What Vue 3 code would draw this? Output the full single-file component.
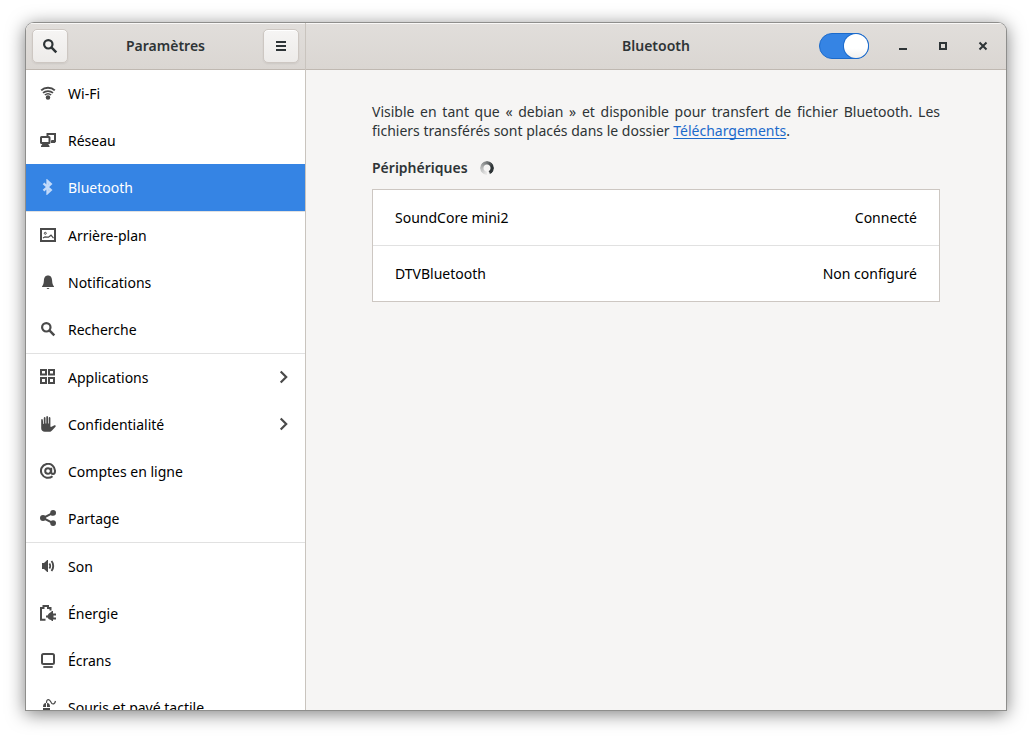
<script setup>
import { ref } from 'vue'

const enabled = ref(true)

const icons = {
  wifi: {
    fill: ['M8 10.2a2.3 2.3 0 1 1 0 4.6a2.3 2.3 0 0 1 0-4.6z'],
    line: [
      { d: 'M1.2 5.4C4.8 1.900 11.2 1.900 14.8 5.4', w: 2 },
      { d: 'M3 7.900c2.800-2.500 7.200-2.500 10 0', w: 1.700 },
      { d: 'M4.800 10c1.800-1.500 4.600-1.500 6.400 0', w: 1.400 }
    ]
  },
  network: {
    fill: ['M3 11h4.500l2 3v1H1v-1z', 'M11 8.500h3.200l1.300 2.500H11z'],
    line: [
      { d: 'M1.500 5H9q.5 0 .5.5V10.500q0 .5-.5.5H1.500q-.5 0-.5-.5V5.500q0-.5.5-.5z', w: 2 },
      { d: 'M7.500 4V2H15v7h-3.500', w: 2 }
    ]
  },
  bluetooth: {
    line: [{ d: 'M3.500 4.300l7.300 6.700L7.500 14V2L10.800 5L3.500 11.700', w: 2.300 }]
  },
  background: {
    line: [
      { d: 'M1 2h14v12H1z', w: 2 },
      { d: 'M3 11l2-1.200l2 .4h1.500l2.500-2l2.500 3', w: 1.200 },
      { d: 'M5.300 5.300a1 1 0 1 1 0 2a1 1 0 0 1 0-2z', w: 1 }
    ]
  },
  bell: {
    fill: ['M8 1.500c3 0 3.900 2.200 4.100 5c.2 2.800.6 4.700 1.900 5.900V13H2v-.6c1.300-1.200 1.700-3.100 1.900-5.900c.2-2.800 1.100-5 4.100-5z', 'M6.500 14h3l-1 1h-1z']
  },
  search: {
    line: [
      { d: 'M6.300 2.100a4.200 4.200 0 1 1 0 8.400a4.200 4.200 0 0 1 0-8.400z', w: 2.200 },
      { d: 'M9.400 9.400l4.900 4.900', w: 2.500 }
    ]
  },
  apps: {
    line: [{ d: 'M1 1h5v4.500H1zM9 1h5v4.500H9zM1 9h5v5H1zM9 9h5v5H9z', w: 2 }]
  },
  hand: {
    fill: ['M1.200 9.500V3.700c0-1 1.500-1 1.600 0l.4 4.300h.6V1.900c0-1.100 1.700-1.100 1.700 0V7.500h.8V.9c0-1.100 1.700-1.100 1.700 0v6.600h.7V1.900c0-1.100 1.700-1.100 1.700 0v8.600l.6.600l3-1.700c1.200-.6 2.300.5 1.500 1.300L12 14.500c-.8.900-1.500 1.300-2.500 1.300H4.800c-2 0-3.600-1.500-3.600-3.500z']
  },
  at: {
    line: [
      { d: 'M12.500 13.200A7 7 0 1 1 15 8c0 1.900-.7 3-2 3s-1.800-.8-1.800-2.200V4.800', w: 2 },
      { d: 'M8 5.200a2.800 2.800 0 1 1 0 5.600a2.800 2.800 0 0 1 0-5.600z', w: 2 }
    ]
  },
  share: {
    fill: [
      'M3 5a3 3 0 1 1 0 6a3 3 0 0 1 0-6z',
      'M13.100 0a2.900 2.900 0 1 1 0 5.800a2.900 2.900 0 0 1 0-5.800z',
      'M13.100 10.200a2.900 2.900 0 1 1 0 5.800a2.900 2.900 0 0 1 0-5.800z'
    ],
    line: [{ d: 'M13 2.900L3 8l10 5.200', w: 2 }]
  },
  sound: {
    fill: ['M2 5h2L7.200 2H8v12h-.8L4 11H2z'],
    line: [
      { d: 'M9.400 5.500c1 1.400 1 3.600 0 5', w: 1.700 },
      { d: 'M11.500 3c2.300 2.700 2.300 7.300 0 10', w: 1.900 }
    ]
  },
  power: {
    fill: ['M6 10.500h1.500Q8.500 8 11 7l1-1h1v2.500h3v2h-2.500v2H16v2h-3V16h-1l-1-1q-2.500-.5-3.500-2.500H6z'],
    line: [{ d: 'M5.500 14.800H1V3h2.500V1H8v2h2.500v2.500', w: 2 }]
  },
  display: {
    line: [
      { d: 'M3.500 2h9q1.500 0 1.500 1.500v7q0 1.500-1.500 1.500h-9q-1.500 0-1.500-1.500v-7q0-1.500 1.500-1.500z', w: 2 },
      { d: 'M3.300 15h9.400', w: 1.800 }
    ]
  },
  mouse: {
    fill: ['M3 8c0-2.500 1-4 3-4v4zM7 4c2.200 0 3 1.500 3 4H7zM3 9h7v4q0 3-3.500 3T3 13z'],
    line: [{ d: 'M6.500 4C6.500 1 7.300.6 8.500.6c2.500 0 2 4.400 4.500 4.400c1.500 0 2-1 2.500-3', w: 1.200 }]
  }
}

const groups = [
  [
    { label: 'Wi-Fi', icon: 'wifi' },
    { label: 'Réseau', icon: 'network' },
    { label: 'Bluetooth', icon: 'bluetooth', active: true }
  ],
  [
    { label: 'Arrière-plan', icon: 'background' },
    { label: 'Notifications', icon: 'bell' },
    { label: 'Recherche', icon: 'search' }
  ],
  [
    { label: 'Applications', icon: 'apps', submenu: true },
    { label: 'Confidentialité', icon: 'hand', submenu: true },
    { label: 'Comptes en ligne', icon: 'at' },
    { label: 'Partage', icon: 'share' }
  ],
  [
    { label: 'Son', icon: 'sound' },
    { label: 'Énergie', icon: 'power' },
    { label: 'Écrans', icon: 'display' },
    { label: 'Souris et pavé tactile', icon: 'mouse' }
  ]
]

const devices = [
  { name: 'SoundCore mini2', state: 'Connecté' },
  { name: 'DTVBluetooth', state: 'Non configuré' }
]
</script>

<template>
  <div class="desktop">
    <div class="window">
      <aside class="sidebar">
        <header class="bar side-bar">
          <button class="tool" type="button" aria-label="Rechercher">
            <svg class="icon" viewBox="0 0 16 16">
              <path v-for="p in icons.search.line" :key="p.d" :d="p.d" :stroke-width="p.w" fill="none" stroke="currentColor" />
            </svg>
          </button>
          <h1 class="title">Paramètres</h1>
          <button class="tool" type="button" aria-label="Menu">
            <svg class="icon" viewBox="0 0 16 16">
              <path d="M3 3h10v2H3zM3 7h10v2H3zM3 11h10v2H3z" fill="currentColor" />
            </svg>
          </button>
        </header>
        <nav class="nav">
          <ul v-for="(group, g) in groups" :key="g" class="group">
            <li v-for="item in group" :key="item.label">
              <a class="row" :class="{ active: item.active }" href="#" :aria-current="item.active ? 'page' : null">
                <svg class="icon" viewBox="0 0 16 16" aria-hidden="true">
                  <path v-for="d in icons[item.icon].fill" :key="d" :d="d" fill="currentColor" />
                  <path v-for="p in icons[item.icon].line" :key="p.d" :d="p.d" :stroke-width="p.w" fill="none" stroke="currentColor" />
                </svg>
                <span class="label">{{ item.label }}</span>
                <svg v-if="item.submenu" class="icon" viewBox="0 0 16 16" aria-hidden="true">
                  <path d="M5.700 2.500l5.500 5.500l-5.500 5.500" fill="none" stroke="currentColor" stroke-width="2.200" />
                </svg>
              </a>
            </li>
          </ul>
        </nav>
      </aside>

      <div class="main">
        <header class="bar main-bar">
          <span></span>
          <h2 class="title">Bluetooth</h2>
          <div class="controls">
            <input v-model="enabled" class="switch" type="checkbox" role="switch" aria-label="Bluetooth" />
            <button class="win" type="button" aria-label="Réduire">
              <svg class="icon" viewBox="0 0 16 16"><path d="M4 10h8v2H4z" fill="currentColor" /></svg>
            </button>
            <button class="win" type="button" aria-label="Agrandir">
              <svg class="icon" viewBox="0 0 16 16"><path d="M5 5h6v6H5z" fill="none" stroke="currentColor" stroke-width="2" /></svg>
            </button>
            <button class="win" type="button" aria-label="Fermer">
              <svg class="icon" viewBox="0 0 16 16"><path d="M4.500 4.500l7 7M11.500 4.500l-7 7" fill="none" stroke="currentColor" stroke-width="2" /></svg>
            </button>
          </div>
        </header>
        <main class="content">
          <p class="intro">Visible en tant que « debian » et disponible pour transfert de fichier Bluetooth. Les fichiers transférés sont placés dans le dossier <a href="#">Téléchargements</a>.</p>
          <div class="heading">
            <h3>Périphériques</h3>
            <span class="spinner" role="status" aria-label="Recherche en cours"></span>
          </div>
          <ul class="devices">
            <li v-for="device in devices" :key="device.name">
              <span>{{ device.name }}</span>
              <span>{{ device.state }}</span>
            </li>
          </ul>
        </main>
      </div>
    </div>
  </div>
</template>

<style>
body {
  background: #fff;
}
</style>

<style scoped>
.desktop {
  box-sizing: border-box;
  height: 100vh;
  padding: 23px 26px 29px;
  font-family: 'Noto Sans', 'Open Sans', sans-serif;
  font-size: 14px;
  line-height: 19px;
  color: #2e3436;
}
.window {
  display: flex;
  height: 100%;
  overflow: hidden;
  border-radius: 8px 8px 0 0;
  background: #f6f5f4;
  box-shadow: 0 0 0 1px #8e8e8c, 0 3px 18px 1px rgba(0, 0, 0, 0.5);
}
.sidebar {
  display: flex;
  flex-direction: column;
  flex: 0 0 279px;
  border-right: 1px solid #c9c4be;
  background: #fff;
}
.main {
  display: flex;
  flex-direction: column;
  flex: 1;
  min-width: 0;
}
.bar {
  box-sizing: border-box;
  flex: 0 0 47px;
  align-items: center;
  padding: 0 6px;
  border-bottom: 1px solid #bfb8b1;
  background: linear-gradient(to top, #dad6d2, #e1dedb);
  box-shadow: inset 0 1px #f9f8f7;
}
.side-bar {
  display: flex;
  justify-content: space-between;
}
.main-bar {
  display: grid;
  grid-template-columns: 1fr auto 1fr;
}
.title {
  margin: 0;
  padding-bottom: 2px;
  font-size: 14px;
  line-height: 19px;
  font-weight: 600;
}
.icon {
  display: block;
  flex: none;
  width: 16px;
  height: 16px;
}
.tool {
  display: flex;
  align-items: center;
  justify-content: center;
  box-sizing: border-box;
  width: 36px;
  height: 34px;
  padding: 0;
  border: 1px solid #cdc7c2;
  border-radius: 5px;
  background: linear-gradient(to top, #edebe9, #f6f5f4);
  box-shadow: inset 0 1px #fff, 0 1px 2px rgba(0, 0, 0, 0.07);
  color: #2e3436;
}
.controls {
  display: flex;
  align-items: center;
  justify-content: flex-end;
  gap: 16px;
  padding-right: 5px;
}
.switch {
  appearance: none;
  display: flex;
  box-sizing: border-box;
  width: 50px;
  height: 26px;
  margin: 0 6px 0 0;
  border: 1px solid #1b6acb;
  border-radius: 13px;
  background: #cfcac4;
}
.switch::before {
  content: '';
  width: 24px;
  height: 24px;
  border-radius: 50%;
  background: linear-gradient(to top, #f1f0ee, #fff 40%);
  box-shadow: 0 0 0 1px #1b6acb;
}
.switch:checked {
  justify-content: flex-end;
  background: #3584e4;
}
.win {
  width: 24px;
  height: 24px;
  padding: 4px;
  border: 0;
  background: none;
  color: #2e3436;
}
.nav {
  flex: 1;
  min-height: 0;
  overflow: hidden;
}
.group {
  margin: 0;
  padding: 0;
  list-style: none;
}
.group + .group {
  border-top: 1px solid #e1e1e1;
}
.row {
  display: flex;
  gap: 12px;
  padding: 15px 14px 16px;
  line-height: 18px;
  height: 16px;
  color: #4a4a4a;
  text-decoration: none;
}
.label {
  flex: 1;
  color: #000;
}
.row.active {
  background: #3584e4;
  color: #c2dafa;
}
.row.active .label {
  color: #fff;
}
.content {
  padding: 32px 66px;
}
.intro {
  margin: 0;
  text-align: justify;
}
.intro a {
  color: #1b6acb;
  text-underline-offset: 2px;
  text-decoration-skip-ink: none;
}
.heading {
  display: flex;
  align-items: center;
  gap: 12px;
  margin: 18px 0 12px;
}
.heading h3 {
  margin: 0;
  font-size: 14px;
  line-height: 19px;
  font-weight: 600;
}
.spinner {
  width: 14px;
  height: 14px;
  border-radius: 50%;
  background: conic-gradient(from 180deg, rgba(46, 52, 54, 0.05), rgba(46, 52, 54, 0.3) 90deg, rgba(46, 52, 54, 0.6) 170deg, #2e3436 250deg, #2e3436 325deg, transparent 340deg);
  mask: radial-gradient(circle, transparent 3px, #000 4px);
}
.devices {
  margin: 0;
  padding: 0;
  list-style: none;
  border: 1px solid #cdc7c2;
  background: #fff;
  color: #000;
}
.devices li {
  display: flex;
  justify-content: space-between;
  padding: 18px 22px;
}
.devices li + li {
  border-top: 1px solid #e1e1e1;
}
</style>
